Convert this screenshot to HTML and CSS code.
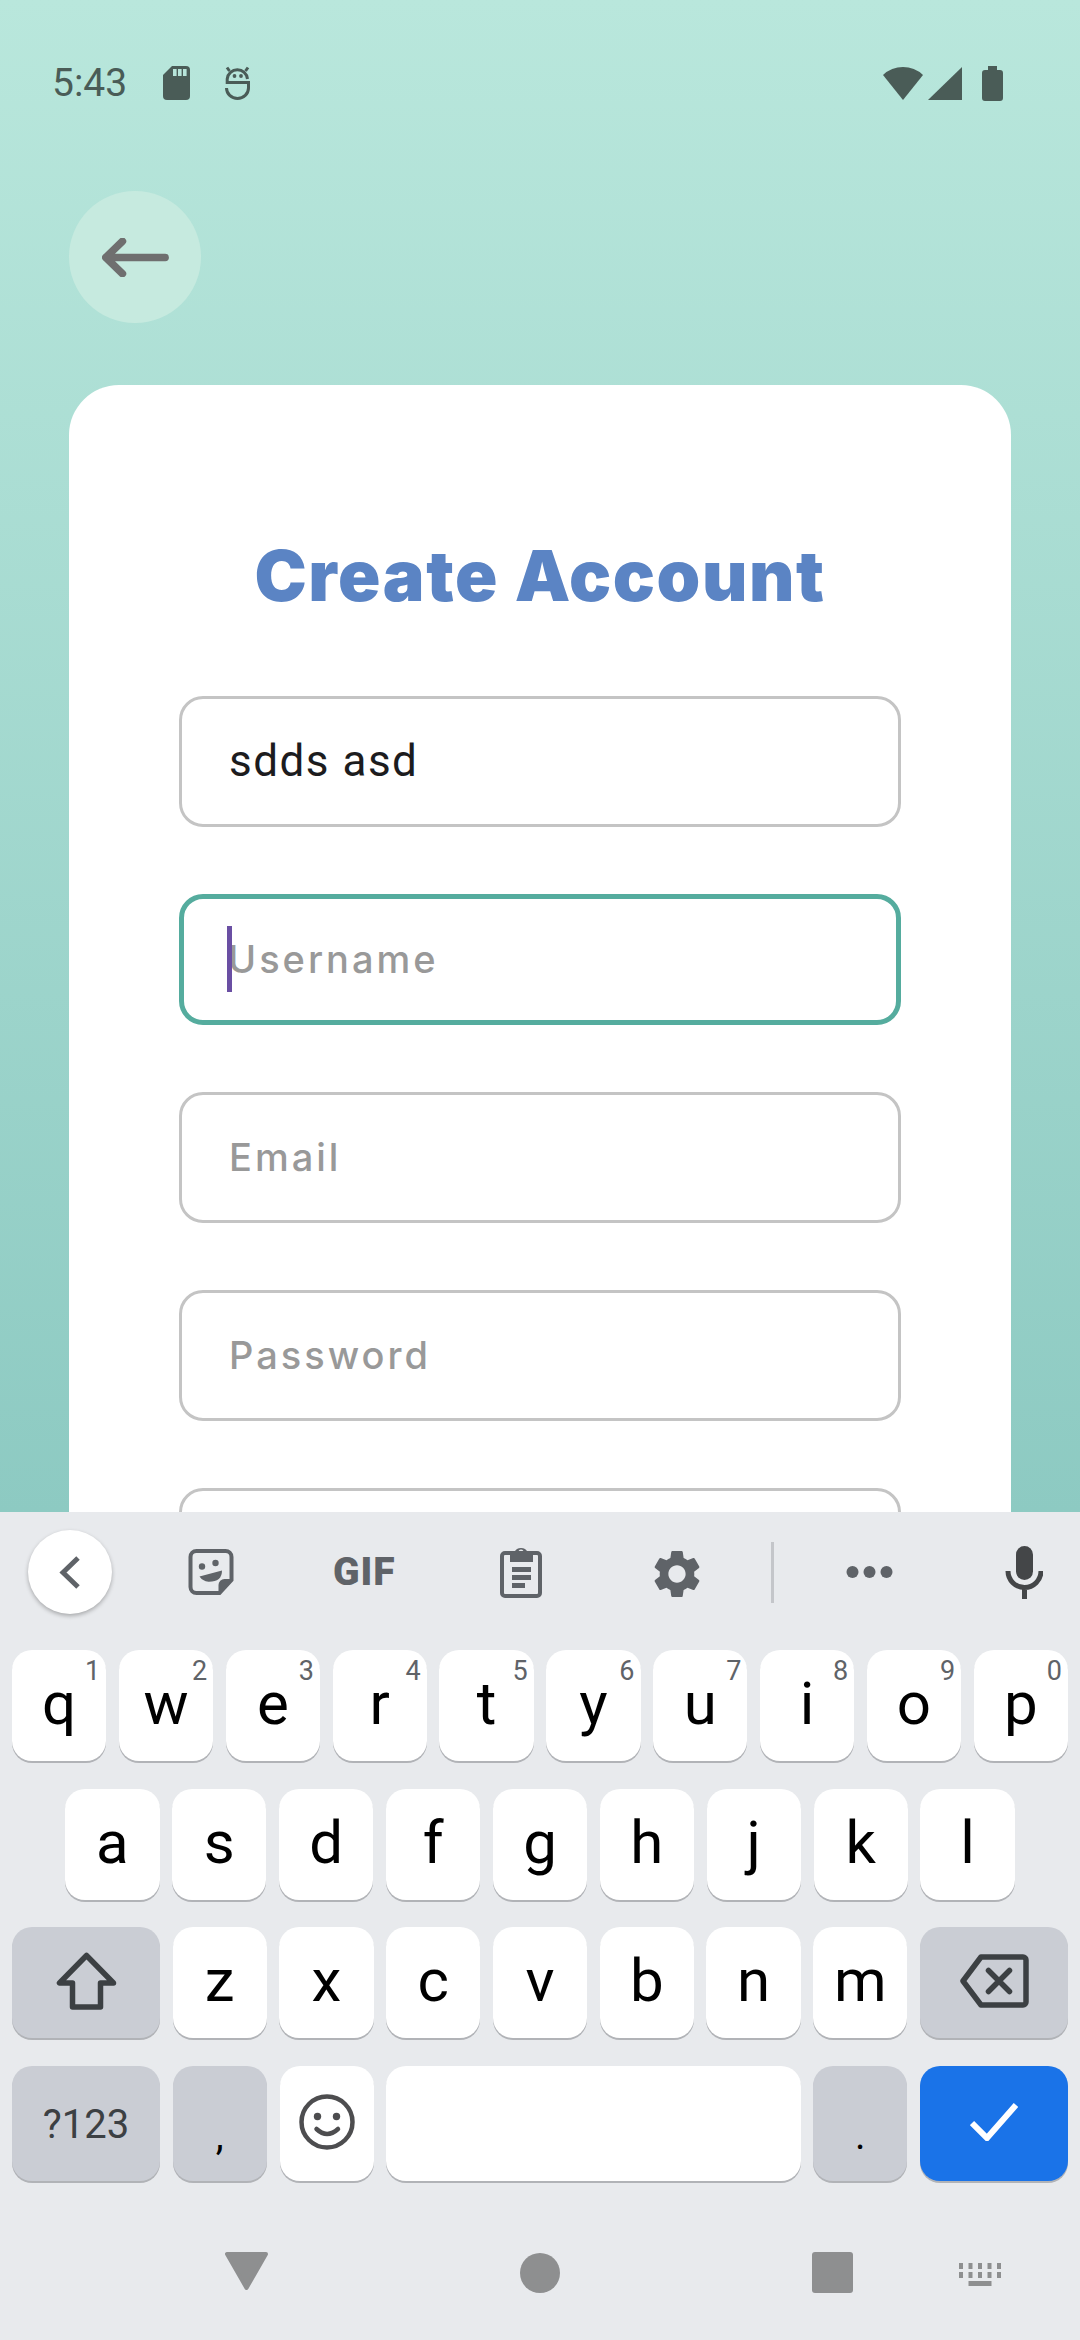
FILE: index.html
```html
<!DOCTYPE html>
<html lang="en">
<head>
<meta charset="utf-8">
<title>Create Account</title>
<link rel="stylesheet" href="styles.css">
</head>
<body>
<div class="app">
  <main class="screen">
    <div class="status">
      <div class="status-left">
        <span class="time">5:43</span>
        <svg class="sd" viewBox="0 0 27 34"><path class="dark" d="M9 0H23a4 4 0 0 1 4 4V30a4 4 0 0 1-4 4H4a4 4 0 0 1-4-4V9Z"/><path class="slot" d="M10 3h3.6v7H10zM15 3h3.6v7H15zM20 3h3.6v7H20z"/></svg>
        <svg class="droid" viewBox="0 0 25 34"><path class="droid-line" d="M22.5 13A10.2 10.2 0 0 0 2.2 13V16.5H23.5V22A11 10.5 0 0 1 1.5 22"/><path class="droid-line" d="M2 1.5L4.5 5M23 1.5L20.5 5"/><circle class="dark" cx="9.5" cy="10" r="1.9"/><circle class="dark" cx="16" cy="10" r="1.9"/></svg>
      </div>
      <div class="status-right">
        <svg class="wifi" viewBox="0 0 40 34"><path class="dark" d="M0 9A29 29 0 0 1 40 9L20 34Z"/></svg>
        <svg class="signal" viewBox="0 0 34 33"><path class="dark" d="M34 0V33H0Z"/></svg>
        <svg class="battery" viewBox="0 0 21 35"><path class="dark" d="M6 0H15V4H18a3 3 0 0 1 3 3V32a3 3 0 0 1-3 3H3a3 3 0 0 1-3-3V7a3 3 0 0 1 3-3H6Z"/></svg>
      </div>
    </div>
    <div class="back">
      <svg class="back-arrow" viewBox="0 0 72 42"><path d="M4 21H68M22 3.500L4 21L22 38.500"/></svg>
    </div>
    <section class="card">
      <h1 class="title">Create Account</h1>
      <div class="field"><span class="value">sdds asd</span></div>
      <div class="field field-focus"><i class="caret"></i><span class="hint">Username</span></div>
      <div class="field"><span class="hint">Email</span></div>
      <div class="field"><span class="hint">Password</span></div>
      <div class="field"></div>
    </section>
  </main>

  <section class="keyboard">
    <div class="toolbar">
      <div class="collapse">
        <svg class="chev" viewBox="0 0 22 33"><path d="M19 2L4 16.500L19 31"/></svg>
      </div>
      <svg class="tool sticker" viewBox="0 0 45 46">
        <path class="tool-line" d="M8 2H37a6 6 0 0 1 6 6V31L31 44H8a6 6 0 0 1-6-6V8a6 6 0 0 1 6-6Z"/>
        <path class="tool-fill" d="M43 30H36a6 6 0 0 0-6 6V44Z"/>
        <circle class="tool-fill" cx="13.500" cy="17.500" r="3.200"/>
        <circle class="tool-fill" cx="27" cy="14" r="3.200"/>
        <path class="tool-fill" d="M11 27.500L33.500 21.500Q33.500 33 20 32.800Q14 32 11 27.500Z"/>
      </svg>
      <span class="tool gif">GIF</span>
      <svg class="tool clip" viewBox="0 0 42 52">
        <path class="tool-line" d="M5 7H37a3 3 0 0 1 3 3V47a3 3 0 0 1-3 3H5a3 3 0 0 1-3-3V10a3 3 0 0 1 3-3Z"/>
        <path class="tool-fill" fill-rule="evenodd" d="M10 6H14.500A7 6.500 0 0 1 27.500 6H33V16H10ZM21 3.500a2.600 2.600 0 1 0 .01 0Z"/>
        <path class="tool-fill" d="M12 21H31V26H12ZM12 29H31V34H12ZM12 37H25V42H12Z"/>
      </svg>
      <svg class="tool gear" viewBox="2.500 2 19 20"><path class="tool-fill" d="M19.14 12.94c.04-.3.06-.61.06-.94 0-.32-.02-.64-.07-.94l2.030-1.580c.18-.14.23-.41.12-.61l-1.920-3.320c-.12-.22-.37-.29-.59-.22l-2.390.96c-.5-.38-1.030-.7-1.620-.94l-.36-2.540c-.04-.24-.24-.41-.48-.41h-3.840c-.24 0-.43.17-.47.41l-.36 2.540c-.59.24-1.130.57-1.620.94l-2.390-.96c-.22-.08-.47 0-.59.22L2.740 8.870c-.12.21-.08.47.12.61l2.030 1.580c-.05.3-.09.63-.09.94s.02.64.07.94l-2.030 1.580c-.18.14-.23.41-.12.61l1.920 3.320c.12.22.37.29.59.22l2.390-.96c.5.38 1.030.7 1.620.94l.36 2.54c.05.24.24.41.48.41h3.840c.24 0 .44-.17.47-.41l.36-2.540c.59-.24 1.130-.56 1.620-.94l2.390.96c.22.08.47 0 .59-.22l1.920-3.320c.12-.22.07-.47-.12-.61l-2.010-1.580zM12 15.600c-1.980 0-3.600-1.620-3.600-3.600s1.620-3.600 3.600-3.600 3.600 1.620 3.600 3.600-1.620 3.600-3.600 3.600z"/></svg>
      <i class="tool divider"></i>
      <svg class="tool dots" viewBox="0 0 46 12"><circle class="tool-fill" cx="6" cy="6" r="6"/><circle class="tool-fill" cx="23" cy="6" r="6"/><circle class="tool-fill" cx="40" cy="6" r="6"/></svg>
      <svg class="tool mic" viewBox="0 0 38 53">
        <rect class="mic-fill" x="11" y="0" width="17" height="34" rx="8.500"/>
        <path class="mic-line" d="M3 25A16.500 16.500 0 0 0 36 25M19.500 42V53"/>
      </svg>
    </div>

    <div class="keys">
      <div class="row">
        <div class="key"><span class="num">1</span>q</div>
        <div class="key"><span class="num">2</span>w</div>
        <div class="key"><span class="num">3</span>e</div>
        <div class="key"><span class="num">4</span>r</div>
        <div class="key"><span class="num">5</span>t</div>
        <div class="key"><span class="num">6</span>y</div>
        <div class="key"><span class="num">7</span>u</div>
        <div class="key"><span class="num">8</span>i</div>
        <div class="key"><span class="num">9</span>o</div>
        <div class="key"><span class="num">0</span>p</div>
      </div>
      <div class="row row-home">
        <div class="key">a</div><div class="key">s</div><div class="key">d</div>
        <div class="key">f</div><div class="key">g</div><div class="key">h</div>
        <div class="key">j</div><div class="key">k</div><div class="key">l</div>
      </div>
      <div class="row">
        <div class="key key-wide key-grey">
          <svg class="shift" viewBox="0 0 61 58"><path d="M30.500 3.500L3.500 31H16.500V55H44.500V31H57.500Z"/></svg>
        </div>
        <div class="key">z</div><div class="key">x</div><div class="key">c</div>
        <div class="key">v</div><div class="key">b</div><div class="key">n</div><div class="key">m</div>
        <div class="key key-wide key-grey">
          <svg class="bksp" viewBox="0 0 69 54"><path d="M21 3H63a3 3 0 0 1 3 3V48a3 3 0 0 1-3 3H21L3 27Z"/><path d="M28.500 16.500L49.500 37.500M49.500 16.500L28.500 37.500"/></svg>
        </div>
      </div>
      <div class="row row-bottom">
        <div class="key key-wide key-grey key-sym">?123</div>
        <div class="key key-fixed key-grey key-punct">,</div>
        <div class="key key-fixed">
          <svg class="emoji" viewBox="0 0 56 56"><circle class="emoji-line" cx="28" cy="28" r="25.500"/><circle class="emoji-eye" cx="18.500" cy="22.500" r="3.700"/><circle class="emoji-eye" cx="37.500" cy="22.500" r="3.700"/><path class="emoji-line" d="M17.500 35Q28 45 39 35"/></svg>
        </div>
        <div class="key key-space"></div>
        <div class="key key-fixed key-grey key-punct">.</div>
        <div class="key key-wide key-blue">
          <svg class="check" viewBox="0 0 48 38"><path d="M2 20L17 35L46 2"/></svg>
        </div>
      </div>
    </div>

    <nav class="navbar">
      <svg class="nav-back" viewBox="0 0 45 40"><path d="M3 3H42L22.500 37Z"/></svg>
      <i class="nav-home"></i>
      <i class="nav-recent"></i>
      <svg class="nav-kbd" viewBox="0 0 42 23">
        <path d="M0 0h4v6H0zM9.500 0h4v6h-4zM19 0h4v6h-4zM28.500 0h4v6h-4zM38 0h4v6h-4zM0 9h4v6H0zM9.500 9h4v6h-4zM19 9h4v6h-4zM28.500 9h4v6h-4zM38 9h4v6h-4zM9.500 18h23v5h-23z"/>
      </svg>
    </nav>
  </section>
</div>
</body>
</html>
```

FILE: styles.css
```css
* { box-sizing: border-box; }
html, body { margin: 0; padding: 0; }
body { width: 1080px; height: 2340px; overflow: hidden; font-family: Roboto, "Liberation Sans", sans-serif; }
.app { width: 1080px; height: 2340px; display: flex; flex-direction: column; }

.screen { height: 1512px; overflow: hidden; flex: none; background: linear-gradient(180deg, #b9e7dc 0%, #8dcac2 100%); }

.status { display: flex; justify-content: space-between; align-items: center; height: 36px; margin-top: 65px; padding: 0 77px 0 52px; }
.status-left, .status-right { display: flex; align-items: center; }
.time { width: 74px; font-size: 39px; line-height: 36px; color: #4a5c57; }
.sd { width: 27px; height: 34px; margin-left: 37px; }
.droid { width: 25px; height: 34px; margin-left: 35px; }
.dark { fill: #4a5c57; }
.slot { fill: #b7e5da; }
.droid-line { fill: none; stroke: #4a5c57; stroke-width: 3; }
.wifi { width: 40px; height: 34px; }
.signal { width: 34px; height: 33px; margin-left: 5px; }
.battery { width: 21px; height: 35px; margin-left: 20px; }

.back { display: flex; align-items: center; justify-content: center; width: 132px; height: 132px; margin: 90px 0 0 69px; border-radius: 50%; background: #c6eadf; }
.back-arrow { width: 67px; height: 39px; fill: none; stroke: #6f6f6f; stroke-width: 8; stroke-linecap: round; stroke-linejoin: round; }

.card { margin: 62px 69px 0; height: 1300px; padding: 0 110px; background: #fff; border-radius: 50px 50px 0 0; }
.title { margin: 0; padding-top: 144px; height: 311px; font-family: Inter, sans-serif; font-size: 70px; line-height: 94px; font-weight: 900; letter-spacing: 1.6px; text-align: center; color: #5b84c4; }
.field { position: relative; display: flex; align-items: center; height: 131px; margin-bottom: 67px; padding-left: 47px; border: 3px solid #c4c4c4; border-radius: 24px; }
.field-focus { border: 5px solid #55ac9e; padding-left: 44px; }
.value { font-size: 44px; letter-spacing: 1.5px; color: #1c1c1e; margin-top: -2px; }
.hint { font-family: Inter, sans-serif; font-size: 38px; font-weight: 500; letter-spacing: 3px; color: #999; margin-top: -2px; }
.caret { position: absolute; left: 43px; top: 27px; width: 5px; height: 66px; background: #6a4fa3; }

.keyboard { flex: 1; background: #e8eaed; }
.toolbar { display: flex; align-items: center; height: 138px; padding: 18px 0 36px 28px; }
.collapse { display: flex; align-items: center; justify-content: center; flex: none; width: 84px; height: 84px; border-radius: 50%; background: #fff; box-shadow: 0 2px 4px rgba(0,0,0,.28); }
.chev { width: 22px; height: 33px; fill: none; stroke: #5f6368; stroke-width: 5; }
.tool { flex: none; display: block; }
.tool-line { fill: none; stroke: #5f6368; stroke-width: 4; }
.tool-fill { fill: #5f6368; }
.sticker { width: 46px; height: 46px; margin-left: 76px; }
.gif { margin-left: 99px; width: 63px; font-size: 39px; line-height: 28px; font-weight: 900; letter-spacing: 1px; color: #5f6368; }
.clip { width: 42px; height: 52px; margin-left: 104px; }
.gear { width: 46px; height: 48px; margin: 4px 0 0 112px; }
.divider { width: 3px; height: 61px; margin-left: 71px; background: #c4c6ca; }
.dots { width: 47px; height: 12px; margin-left: 72px; }
.mic { width: 38px; height: 53px; margin-left: 112px; }
.mic-fill { fill: #444648; }
.mic-line { fill: none; stroke: #444648; stroke-width: 5; }

.keys { display: flex; flex-direction: column; gap: 27.67px; padding: 0 12px; }
.row { display: flex; gap: 12.67px; height: 111px; }
.row-home { padding: 0 53.3px; }
.row-bottom { height: 115px; }
.key { position: relative; display: flex; align-items: center; justify-content: center; flex: 1 1 0; padding-bottom: 3px; border-radius: 20px; background: #fff; box-shadow: 0 2px 0 #b1b3b7; font-size: 60px; line-height: 1; color: #000; }
.row-bottom .key, .key-wide { flex: none; }
.key-wide { width: 148px; }
.key-fixed { width: 94.2px; }
.row-bottom .key-space { flex: 1 1 0; }
.key-grey { background: #cacdd4; }
.key-blue { background: #1a73e8; }
.row-bottom .key-sym { font-size: 40px; color: #3c4043; padding: 4px 0 0; }
.key-punct { font-size: 40px; padding: 26px 0 0; }
.num { position: absolute; top: 8px; right: 6px; font-size: 27px; line-height: 27px; color: #5f6368; }
.shift { width: 61px; height: 58px; fill: none; stroke: #3c4043; stroke-width: 5.5; stroke-linejoin: round; }
.bksp { width: 69px; height: 54px; fill: none; stroke: #3c4043; stroke-width: 5.5; stroke-linejoin: round; stroke-linecap: round; }
.emoji { width: 56px; height: 56px; }
.emoji-line { fill: none; stroke: #4d4d4f; stroke-width: 4.5; stroke-linecap: round; }
.emoji-eye { fill: #4d4d4f; }
.check { width: 48px; height: 38px; fill: none; stroke: #fff; stroke-width: 6; }

.navbar { display: flex; align-items: center; height: 80px; margin-top: 52px; padding-left: 224px; }
.nav-back { flex: none; width: 45px; height: 40px; margin-top: -4px; fill: #8e8f90; stroke: #8e8f90; stroke-width: 4; stroke-linejoin: round; }
.nav-home { flex: none; width: 40px; height: 40px; margin-left: 251px; border-radius: 50%; background: #8e8f90; }
.nav-recent { flex: none; width: 41px; height: 41px; margin-left: 252px; border-radius: 3px; background: #8e8f90; }
.nav-kbd { flex: none; width: 42px; height: 23px; margin: 3px 0 0 106px; fill: #8e8f90; }
```
